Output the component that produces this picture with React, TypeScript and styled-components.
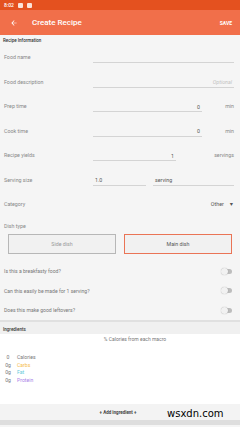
import React from 'react';
import styled, {createGlobalStyle} from "styled-components";

const GlobalStyle = createGlobalStyle`
    html, body {
        margin: 0;
        padding: 0;
        background: #f5f5f5;
        font-family: Roboto, "Noto Sans", sans-serif;
    }
    * { box-sizing: border-box; }
`

const StatusBar = styled.div`
    height: 10px;
    background: #e4511f;
    display: flex;
    align-items: center;
    gap: 4px;
    padding-left: 4px;
    color: #fff;
    font-size: 5px;
    font-weight: 500;
`
const StatusIcon = styled.span`
    width: 5px;
    height: 5px;
    background: #fbe3d9;
    border-radius: 1px;
`
const AppBar = styled.header`
    height: 25px;
    background: #f16f4a;
    display: flex;
    align-items: center;
    padding: 0 8px 0 10px;
    color: #fff;
`
const Title = styled.h1`
    margin: 0 0 0 14px;
    font-size: 8px;
    font-weight: 500;
    flex: 1;
`
const SaveButton = styled.span`
    font-size: 5px;
    font-weight: 700;
`
const SectionHeader = styled.div<{bg?: string; h?: number}>`
    height: ${p => p.h || 10}px;
    display: flex;
    align-items: flex-end;
    font-size: 4.5px;
    font-weight: 500;
    color: #333;
    padding: 0 3px 2px;
    background: ${p => p.bg || 'transparent'};
`
const Form = styled.div`
    display: flex;
    flex-direction: column;
    padding: 0 6px 0 4px;
`
const Row = styled.div`
    height: 24.5px;
    display: flex;
    align-items: center;
`
const Label = styled.span`
    width: 89px;
    font-size: 5.3px;
    color: #888;
`
const Field = styled.div<{width?: number; align?: string}>`
    ${p => p.width ? `width: ${p.width}px;` : 'flex: 1;'}
    height: 10px;
    border-bottom: 1px solid #d4d4d4;
    font-size: 5.3px;
    color: #555;
    display: flex;
    align-items: center;
    justify-content: ${p => p.align || 'flex-start'};
    padding: 0 2px;
    margin-top: 2px;
`
const Hint = styled.span`
    color: #c2c2c2;
    font-style: italic;
`
const Unit = styled.span`
    flex: 1;
    text-align: right;
    font-size: 5.3px;
    color: #888;
`
const Spinner = styled.span`
    margin-left: auto;
    font-size: 5.3px;
    color: #555;
    display: flex;
    align-items: center;
    gap: 5px;
`
const DishLabel = styled.span`
    font-size: 5.3px;
    color: #888;
    padding-top: 6px;
`
const DishRow = styled.div`
    display: flex;
    gap: 8px;
    padding: 5px 8px 0;
`
const DishButton = styled.div<{active?: boolean}>`
    flex: 1;
    height: 20px;
    border: 1px solid ${p => p.active ? '#ea7456' : '#b7b7b7'};
    background: #f1f1f1;
    display: flex;
    align-items: center;
    justify-content: center;
    font-size: 5.3px;
    color: ${p => p.active ? '#555' : '#999'};
`
const ToggleRow = styled.div`
    height: 19.5px;
    display: flex;
    align-items: center;
    justify-content: space-between;
    padding-right: 2px;
    font-size: 5.1px;
    color: #777;
`
const Toggle = styled.span`
    position: relative;
    width: 10px;
    height: 5px;
    border-radius: 3px;
    background: #bdbdbd;
    &::before {
        content: '';
        position: absolute;
        left: -1px;
        top: -1px;
        width: 7px;
        height: 7px;
        border-radius: 50%;
        background: #f1f1f1;
        box-shadow: 0 0 1px rgba(0,0,0,.35);
    }
`
const Divider = styled.div`
    height: 2px;
    background: #e0e0e0;
`
const Ingredients = styled.section`
    background: #fff;
    height: 70px;
    display: flex;
    flex-direction: column;
`
const MacroTitle = styled.div`
    text-align: center;
    font-size: 5px;
    color: #777;
    padding: 2px 0 0 30px;
`
const Macros = styled.div`
    display: grid;
    grid-template-columns: 10px auto;
    column-gap: 4px;
    padding: 12px 0 0 3px;
    font-size: 5.1px;
    line-height: 7.7px;
    color: #777;
`
const Amount = styled.span`
    text-align: center;
`
const Macro = styled.span<{color?: string}>`
    color: ${p => p.color || '#777'};
`
const AddBar = styled.div`
    height: 16px;
    background: #f3f3f3;
    display: flex;
    align-items: center;
    justify-content: center;
    font-size: 4.5px;
    font-weight: 700;
    color: #444;
    padding-right: 4px;
`
const BottomEdge = styled.div`
    height: 5px;
    background: #dedede;
`
const Watermark = styled.span`
    position: absolute;
    left: 167px;
    top: 408px;
    font-family: "DejaVu Sans", sans-serif;
    font-size: 10px;
    color: #000;
`
const Page = styled.div`
    position: relative;
    width: 240px;
    height: 427px;
    overflow: hidden;
`
const Spacer = styled.span<{h: number; w?: number}>`
    height: ${p => p.h}px;
    width: ${p => p.w || 0}px;
    flex-shrink: 0;
`

const BackArrow = () => (
    <svg width="8" height="8" viewBox="0 0 24 24">
        <path d="M20 11H7.83l5.59-5.59L12 4l-8 8 8 8 1.41-1.41L7.83 13H20v-2z" fill="#fff"/>
    </svg>
)

export default function App() {
    return (
        <Page>
            <GlobalStyle/>
            <StatusBar>
                <span>8:02</span>
                <StatusIcon/>
                <StatusIcon/>
            </StatusBar>
            <AppBar>
                <BackArrow/>
                <Title>Create Recipe</Title>
                <SaveButton>SAVE</SaveButton>
            </AppBar>
            <SectionHeader>Recipe Information</SectionHeader>
            <Form>
                <Row><Label>Food name</Label><Field/></Row>
                <Row><Label>Food description</Label><Field align="flex-end"><Hint>Optional</Hint></Field></Row>
                <Row><Label>Prep time</Label><Field width={109} align="flex-end">0</Field><Unit>min</Unit></Row>
                <Row><Label>Cook time</Label><Field width={109} align="flex-end">0</Field><Unit>min</Unit></Row>
                <Row><Label>Recipe yields</Label><Field width={83} align="flex-end">1</Field><Unit>servings</Unit></Row>
                <Row>
                    <Label>Serving size</Label>
                    <Field width={53}>1.0</Field>
                    <Spacer h={1} w={7}/>
                    <Field>serving</Field>
                </Row>
                <Row><Label>Category</Label><Spinner>Other <span>▼</span></Spinner></Row>
                <DishLabel>Dish type</DishLabel>
            </Form>
            <DishRow>
                <DishButton>Side dish</DishButton>
                <DishButton active>Main dish</DishButton>
            </DishRow>
            <Form>
                <Spacer h={8}/>
                <ToggleRow>Is this a breakfasty food?<Toggle/></ToggleRow>
                <ToggleRow>Can this easily be made for 1 serving?<Toggle/></ToggleRow>
                <ToggleRow>Does this make good leftovers?<Toggle/></ToggleRow>
            </Form>
            <Divider/>
            <SectionHeader bg="#f0f0f0" h={12}>Ingredients</SectionHeader>
            <Ingredients>
                <MacroTitle>% Calories from each macro</MacroTitle>
                <Macros>
                    <Amount>0</Amount><Macro>Calories</Macro>
                    <Amount>0g</Amount><Macro color="#f6bd4b">Carbs</Macro>
                    <Amount>0g</Amount><Macro color="#62c9da">Fat</Macro>
                    <Amount>0g</Amount><Macro color="#a982e8">Protein</Macro>
                </Macros>
            </Ingredients>
            <AddBar>+ Add ingredient +</AddBar>
            <BottomEdge/>
            <Watermark>wsxdn.com</Watermark>
        </Page>
    )
}
